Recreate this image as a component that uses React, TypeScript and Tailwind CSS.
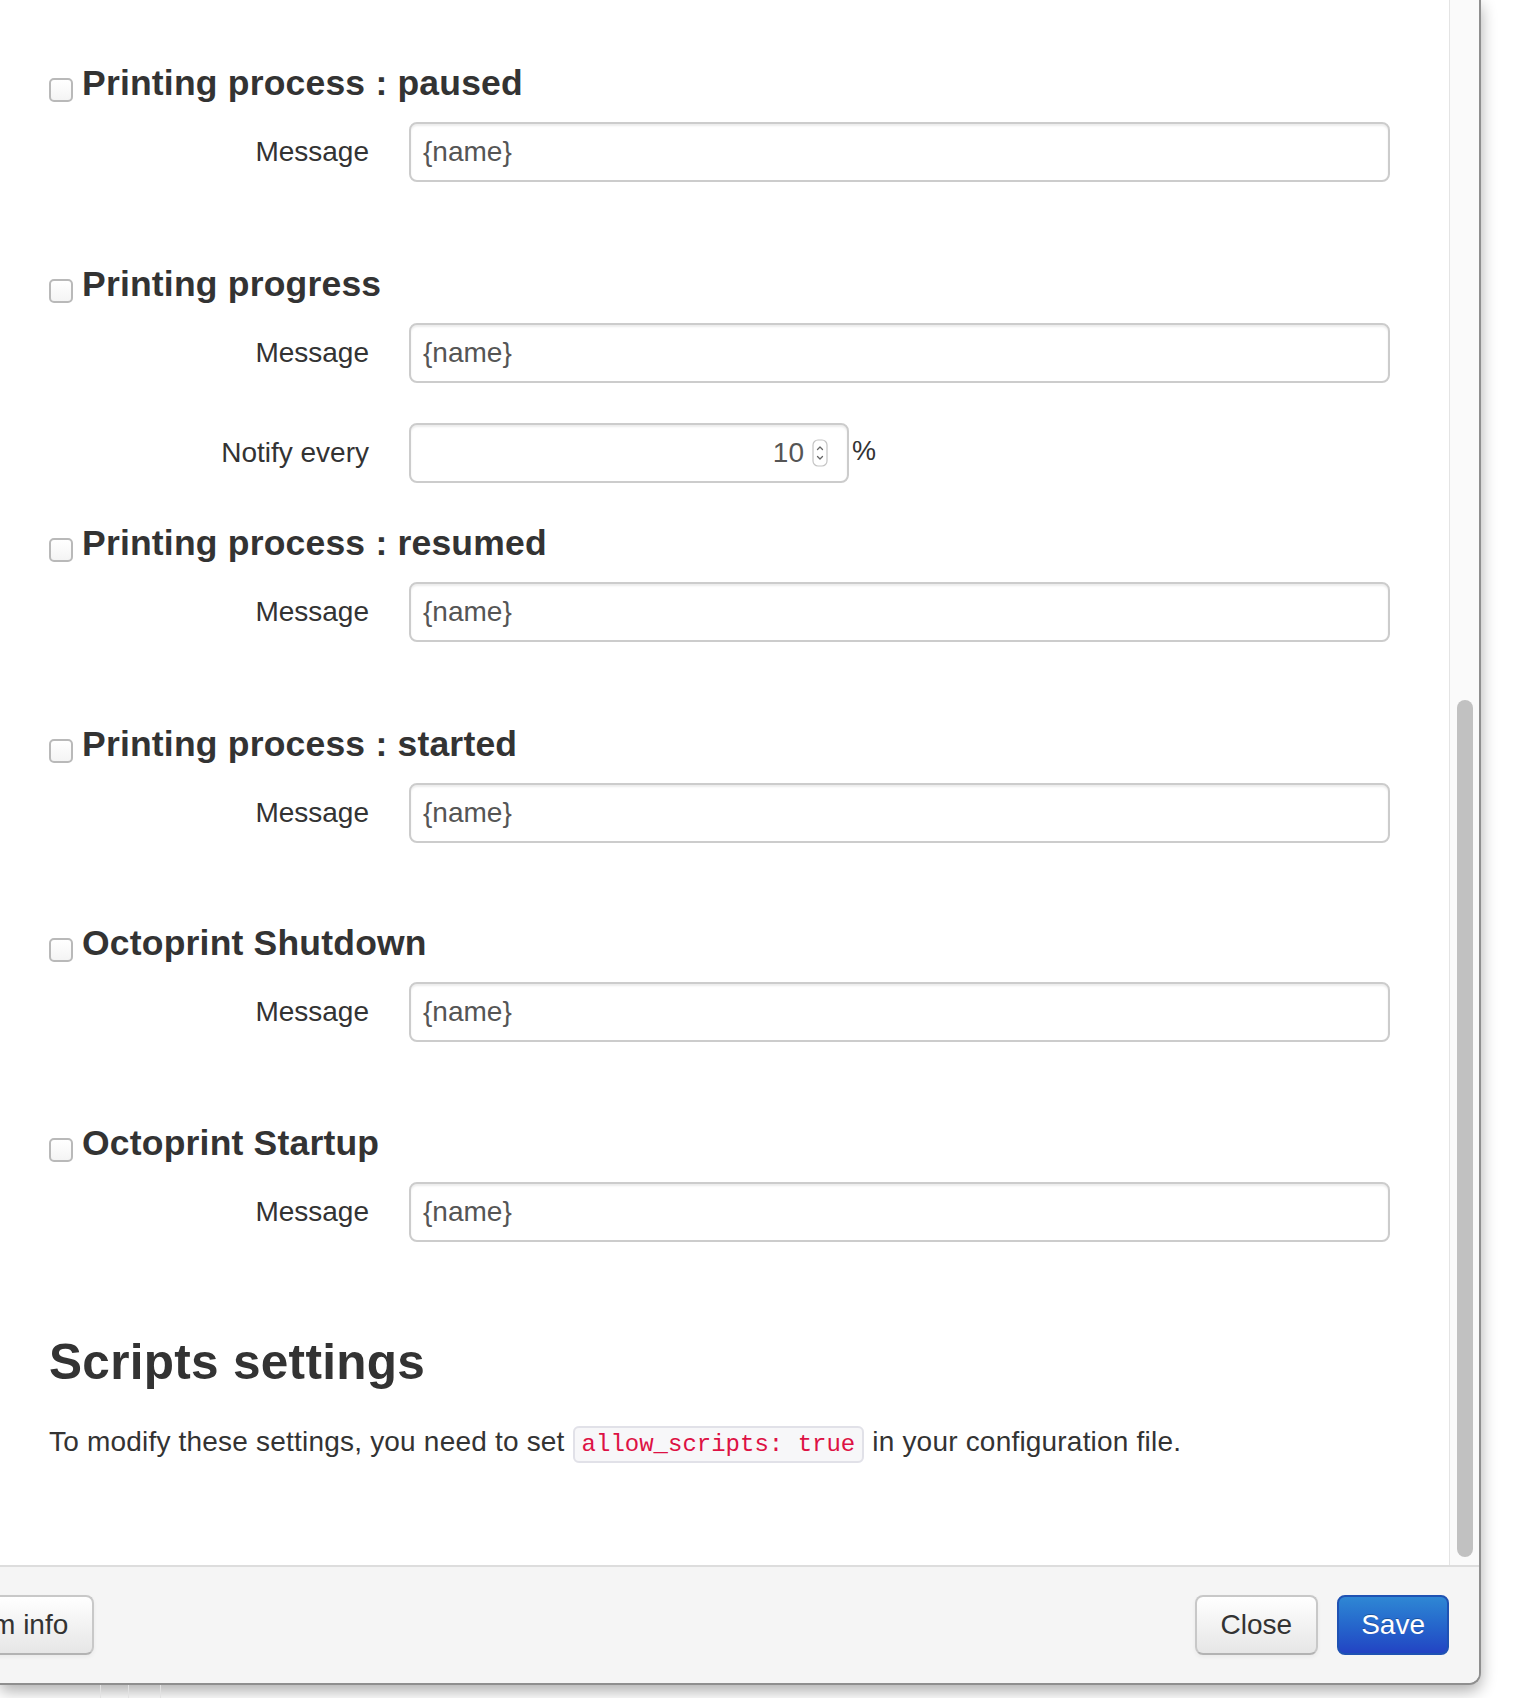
import React from "react";

function Checkbox() {
  return (
    <div className="mt-[15px] mr-[9px] h-[24px] w-[24px] shrink-0 rounded-[5px] border-2 border-[#b9b9b9] bg-linear-to-b from-white to-[#f4f4f4]" />
  );
}

function Heading({ title }: { title: string }) {
  return (
    <div className="flex h-[40px] items-start">
      <Checkbox />
      <div className="text-[35.5px] font-bold leading-[40px] tracking-[0.2px] text-[#333333] whitespace-nowrap">{title}</div>
    </div>
  );
}

function Label({ text }: { text: string }) {
  return (
    <div className="w-[320px] shrink-0 text-right text-[28px] leading-[40px] text-[#333333]">{text}</div>
  );
}

function MessageRow({ className = "" }: { className?: string }) {
  return (
    <div className={"flex items-center " + className}>
      <Label text="Message" />
      <div className="ml-[40px] flex h-[60px] w-[981px] items-center rounded-[8px] border-2 border-[#cccccc] bg-white px-[12px] text-[28px] text-[#555555] shadow-[inset_0_2px_2px_rgba(0,0,0,0.075)]">
        {"{name}"}
      </div>
    </div>
  );
}

function Spinner() {
  return (
    <svg width="16" height="28" viewBox="0 0 16 28" className="ml-[8px]">
      <rect x="1" y="1" width="14" height="26" rx="5" fill="#ffffff" stroke="#c4c4c4" strokeWidth="1.2" />
      <path d="M5.5 10.5 L8 8 L10.5 10.5" fill="none" stroke="#666" strokeWidth="1.3" strokeLinecap="round" strokeLinejoin="round" />
      <path d="M5.5 17.5 L8 20 L10.5 17.5" fill="none" stroke="#666" strokeWidth="1.3" strokeLinecap="round" strokeLinejoin="round" />
    </svg>
  );
}

function NotifyRow() {
  return (
    <div className="mt-[40px] flex items-center">
      <Label text="Notify every" />
      <div className="ml-[40px] flex h-[60px] w-[440px] items-center justify-end rounded-[8px] border-2 border-[#cccccc] bg-white pr-[19px] text-[28px] text-[#555555] shadow-[inset_0_2px_2px_rgba(0,0,0,0.075)]">
        <span>10</span>
        <Spinner />
      </div>
      <span className="ml-[3px] -mt-[4px] text-[27px] text-[#333333]">%</span>
    </div>
  );
}

export default function App() {
  return (
    <div className="h-[1698px] w-[1518px] overflow-hidden bg-white font-['Liberation_Sans',Arial,sans-serif]">
      <div className="flex h-[1685px] w-[1481px] flex-col rounded-br-[12px] border-r-2 border-b-2 border-[#8f8f8f] bg-white shadow-[0_6px_16px_rgba(0,0,0,0.32)]">
        {/* body */}
        <div className="flex h-[1565px] shrink-0">
          <div className="flex-1 pl-[49px] pt-[63px]">
            <Heading title="Printing process : paused" />
            <MessageRow className="mt-[19px]" />

            <div className="mt-[82px]">
              <Heading title="Printing progress" />
            </div>
            <MessageRow className="mt-[19px]" />
            <NotifyRow />

            <div className="mt-[40px]">
              <Heading title="Printing process : resumed" />
            </div>
            <MessageRow className="mt-[19px]" />

            <div className="mt-[82px]">
              <Heading title="Printing process : started" />
            </div>
            <MessageRow className="mt-[19px]" />

            <div className="mt-[80px]">
              <Heading title="Octoprint Shutdown" />
            </div>
            <MessageRow className="mt-[19px]" />

            <div className="mt-[81px]">
              <Heading title="Octoprint Startup" />
            </div>
            <MessageRow className="mt-[19px]" />

            <h3 className="mt-[80px] text-[49.5px] font-bold leading-[80px] tracking-[0.3px] text-[#333333]">Scripts settings</h3>
            <p className="mt-[20px] text-[28px] leading-[40px] tracking-[0.2px] text-[#333333] whitespace-nowrap">
              To modify these settings, you need to set{" "}
              <code className="rounded-[6px] border-2 border-[#e1e1e8] bg-[#f7f7f9] px-[7px] py-[3px] font-['Liberation_Mono',monospace] text-[24px] tracking-normal text-[#dd1144]">
                allow_scripts: true
              </code>{" "}
              in your configuration file.
            </p>
          </div>
          {/* scrollbar track */}
          <div className="relative w-[30px] shrink-0 border-l border-[#e4e4e4] bg-[#fafafa]">
            <div className="absolute left-[7px] top-[700px] h-[857px] w-[16px] rounded-full bg-[#c1c1c1]" />
          </div>
        </div>
        {/* footer */}
        <div className="flex flex-1 items-center rounded-br-[10px] border-t-2 border-[#dddddd] bg-[#f5f5f5] pr-[30px]">
          <button className="-ml-[104px] h-[60px] whitespace-nowrap rounded-[8px] border-2 border-[#c8c8c8] border-b-[#b3b3b3] bg-linear-to-b from-white to-[#e6e6e6] px-[24px] text-[28px] text-[#333333] shadow-[inset_0_2px_0_rgba(255,255,255,0.2),0_2px_4px_rgba(0,0,0,0.05)]">
            System info
          </button>
          <div className="flex-1" />
          <button className="h-[60px] whitespace-nowrap rounded-[8px] border-2 border-[#c8c8c8] border-b-[#b3b3b3] bg-linear-to-b from-white to-[#e6e6e6] px-[24px] text-[28px] text-[#333333] shadow-[inset_0_2px_0_rgba(255,255,255,0.2),0_2px_4px_rgba(0,0,0,0.05)]">
            Close
          </button>
          <button className="ml-[19px] h-[60px] whitespace-nowrap rounded-[8px] border-2 border-[#1f52b3] bg-linear-to-b from-[#2f87d4] to-[#2343c3] px-[22px] text-[28px] text-white [text-shadow:0_-1px_0_rgba(0,0,0,0.25)]">
            Save
          </button>
        </div>
      </div>
      <div className="flex h-[13px] w-[1481px]">
        <div className="w-[100px]" />
        <div className="w-[28px] border-l border-[#e2e2e2]" />
        <div className="w-[32px] border-l border-[#e2e2e2]" />
        <div className="border-l border-[#e2e2e2]" />
      </div>
    </div>
  );
}
